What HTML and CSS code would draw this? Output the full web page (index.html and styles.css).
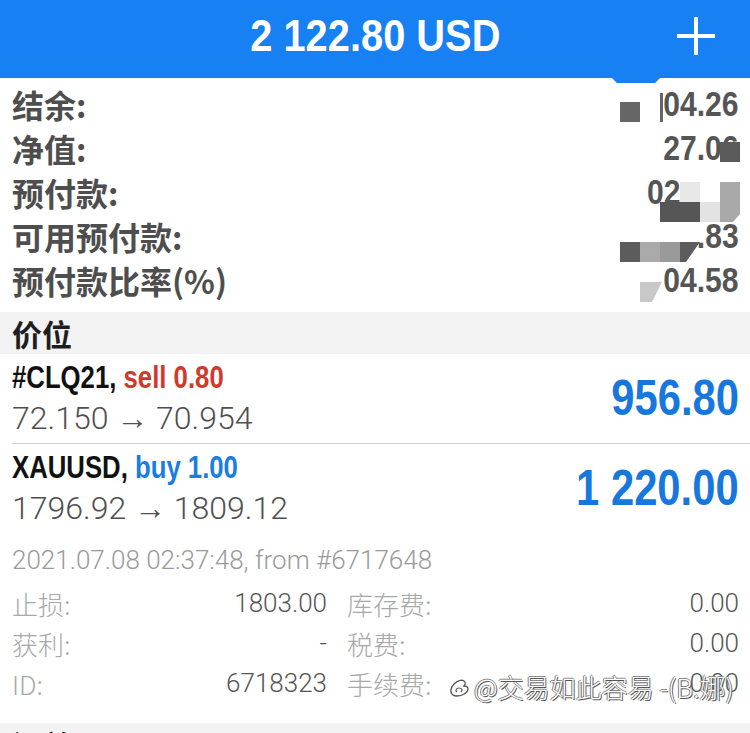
FILE: index.html
```html
<!DOCTYPE html>
<html lang="zh-CN">
<head>
	<meta charset="UTF-8">
	<title>交易</title>
	<link rel="stylesheet" href="styles.css">
</head>
<body>
	<header class="topbar">
		<h1 class="balance">2 122.80 USD</h1>
		<svg class="plus" width="40" height="40" viewBox="0 0 40 40">
			<path d="M20 1v38M1 20h38" stroke="#fff" stroke-width="4" fill="none"/>
		</svg>
		<span class="tab"></span>
	</header>

	<section class="summary">
		<div class="summary-row"><span class="summary-label">结余:</span><span class="summary-value">04.26</span></div>
		<div class="summary-row"><span class="summary-label">净值:</span><span class="summary-value">27.06</span></div>
		<div class="summary-row"><span class="summary-label">预付款:</span><span class="summary-value">02<span class="masked">3.90</span></span></div>
		<div class="summary-row"><span class="summary-label">可用预付款:</span><span class="summary-value">.83</span></div>
		<div class="summary-row"><span class="summary-label">预付款比率(%)</span><span class="summary-value">04.58</span></div>

		<!-- mosaic over the hidden numbers -->
		<svg class="mosaic" width="150" height="240" viewBox="0 0 150 240">
			<rect x="20" y="24" width="20" height="20" fill="#666"/>
			<rect x="60" y="15" width="3" height="29" fill="#666"/>
			<rect x="120" y="64" width="20" height="20" fill="#5a5a5a"/>
			<rect x="80" y="104" width="20" height="20" fill="#e8e8e8"/>
			<rect x="100" y="104" width="20" height="20" fill="#fff"/>
			<polygon points="120,104 140,104 140,136 133,144 120,144" fill="#a9a9a9"/>
			<rect x="60" y="124" width="40" height="20" fill="#565656"/>
			<rect x="100" y="124" width="20" height="20" fill="#e3e3e3"/>
			<rect x="20" y="164" width="20" height="20" fill="#5c5c5c"/>
			<rect x="40" y="164" width="20" height="20" fill="#aaa"/>
			<rect x="60" y="164" width="20" height="20" fill="#9a9a9a"/>
			<polygon points="80,164 100,164 86,184 80,184" fill="#5c5c5c"/>
			<polygon points="40,204 62,204 52,224 40,224" fill="#c8c8c8"/>
		</svg>
	</section>

	<div class="section-title">价位</div>

	<div class="position">
		<div class="pos-info">
			<div class="pos-name">#CLQ21, <span class="sell">sell 0.80</span></div>
			<div class="pos-price">72.150 → 70.954</div>
		</div>
		<div class="pos-profit">956.80</div>
	</div>
	<div class="position">
		<div class="pos-info">
			<div class="pos-name">XAUUSD, <span class="buy">buy 1.00</span></div>
			<div class="pos-price">1796.92 → 1809.12</div>
		</div>
		<div class="pos-profit">1 220.00</div>
	</div>

	<div class="detail">
		<div class="detail-time">2021.07.08 02:37:48, from #6717648</div>
		<div class="detail-grid">
			<div class="cell"><span class="cell-label">止损:</span><span class="cell-value">1803.00</span></div>
			<div class="cell"><span class="cell-label">库存费:</span><span class="cell-value">0.00</span></div>
			<div class="cell"><span class="cell-label">获利:</span><span class="cell-value">-</span></div>
			<div class="cell"><span class="cell-label">税费:</span><span class="cell-value">0.00</span></div>
			<div class="cell"><span class="cell-label">ID:</span><span class="cell-value">6718323</span></div>
			<div class="cell"><span class="cell-label">手续费:</span><span class="cell-value">0.00</span></div>
		</div>
		<div class="watermark">
			<svg width="24" height="24" viewBox="0 0 24 24">
				<path d="M5 20c-3-2-3-7 1-11s9-5 11-2c1 2-1 4-1 4s4 0 4 3c0 4-6 7-11 7-2 0-3 0-4-1z" fill="#fff" stroke="#555" stroke-width="1.3"/>
				<path d="M9 17c-2-1-1-4 2-4s4 2 2 4" fill="none" stroke="#555" stroke-width="1.2"/>
			</svg>
			<span>@交易如此容易 -(B.娜)</span>
		</div>
	</div>

	<div class="section-title">订单</div>
</body>
</html>
```

FILE: styles.css
```css
*{
	margin: 0;
	padding: 0;
	box-sizing: border-box;
}
body{
	width: 750px;
	height: 733px;
	overflow: hidden;
	background: #fff;
	font-family: "Liberation Sans", "Noto Sans CJK SC", sans-serif;
}
.topbar{
	position: relative;
	height: 78px;
	padding-bottom: 6px;
	background: #1780f2;
	display: grid;
	grid-template-columns: 1fr auto 1fr;
	align-items: center;
}
/* the app uses a condensed face, squeeze the plain one */
.balance{
	grid-column: 2;
	font-weight: bold;
	font-size: 45px;
	color: #fff;
	transform: scaleX(0.885);
}
.plus{
	justify-self: end;
	margin-right: 34px;
}
.tab{
	position: absolute;
	left: 612px;
	top: 78px;
	width: 48px;
	height: 5px;
	background: #1780f2;
	clip-path: polygon(0 0, 100% 0, 90% 100%, 10% 100%);
}

/* account summary */
.summary{
	position: relative;
	padding: 4px 11px 10px 12px;
}
.summary-row{
	height: 44px;
	display: flex;
	justify-content: space-between;
	align-items: center;
}
.summary-label{
	font-family: "Noto Sans CJK SC", sans-serif;
	font-weight: bold;
	font-size: 32px;
	color: #4e4e4e;
}
.summary-value{
	font-weight: bold;
	font-size: 35px;
	color: #555;
	transform: scaleX(0.86);
	transform-origin: right center;
}
.masked{
	color: transparent;
}
.mosaic{
	position: absolute;
	left: 600px;
	top: 0;
}

.section-title{
	height: 42px;
	padding-left: 12px;
	background: #f3f3f3;
	font-family: "Noto Sans CJK SC", sans-serif;
	font-weight: bold;
	font-size: 30px;
	line-height: 42px;
	color: #1e1e1e;
}

/* open positions */
.position{
	display: flex;
	justify-content: space-between;
	align-items: center;
	height: 89px;
	padding: 4px 11px 5px 12px;
}
.position + .position{
	height: 90px;
	margin-left: 12px;
	padding-left: 0;
	border-top: 1px solid #d2d2d2;
}
.pos-name{
	font-weight: bold;
	font-size: 31px;
	line-height: 40px;
	color: #111;
	transform: scaleX(0.83);
	transform-origin: left center;
	white-space: nowrap;
}
.sell{
	color: #d03a2c;
}
.buy{
	color: #1a7de2;
}
.pos-price{
	font-family: Roboto, "Liberation Sans", sans-serif;
	font-weight: 300;
	font-size: 32px;
	line-height: 40px;
	color: #505050;
}
.pos-profit{
	font-weight: bold;
	font-size: 50px;
	color: #1877dc;
	transform: scaleX(0.835);
	transform-origin: right center;
}

/* expanded position details */
.detail{
	position: relative;
	padding: 10px 11px 20px 12px;
}
.detail-time{
	font-family: Roboto, "Liberation Sans", sans-serif;
	font-weight: 300;
	font-size: 26px;
	line-height: 34px;
	color: #9a9a9a;
	margin-bottom: 6px;
}
.detail-grid{
	display: grid;
	grid-template-columns: 315px 1fr;
	column-gap: 20px;
}
.cell{
	height: 40px;
	display: flex;
	justify-content: space-between;
	align-items: center;
}
.cell-label{
	font-family: "Noto Sans CJK SC", sans-serif;
	font-weight: 300;
	font-size: 26px;
	color: #a8a8a8;
}
.cell-value{
	font-family: Roboto, "Liberation Sans", sans-serif;
	font-weight: 300;
	font-size: 26px;
	color: #555;
}
.watermark{
	position: absolute;
	left: 448px;
	top: 135px;
	display: flex;
	align-items: center;
	gap: 2px;
	font-family: "Noto Sans CJK SC", sans-serif;
	font-weight: 300;
	font-size: 26px;
	color: #fff;
	text-shadow: 1px 1px 0 #555, -1px 0 0 #777, 0 -1px 0 #888;
}
```
